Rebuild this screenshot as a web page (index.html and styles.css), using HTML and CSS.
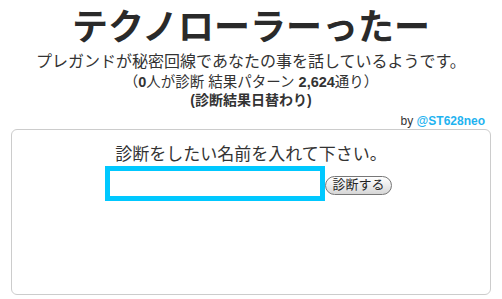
FILE: index.html
```html
<!DOCTYPE html>
<html lang="ja">
<head>
<meta charset="utf-8">
<title>テクノローラーったー</title>
<link rel="stylesheet" href="styles.css">
</head>
<body>
<div class="wrap">
  <h1 class="title">テクノローラーったー</h1>
  <p class="desc">プレガンドが秘密回線であなたの事を話しているようです。</p>
  <p class="count">（<b>0</b>人が診断 結果パターン <b>2,624</b>通り）</p>
  <p class="daily">(診断結果日替わり)</p>
  <p class="by">by <a class="author" href="#">@ST628neo</a></p>
  <div class="box">
    <p class="prompt">診断をしたい名前を入れて下さい。</p>
    <form class="row">
      <input class="name" type="text">
      <button class="submit" type="button">診断する</button>
    </form>
  </div>
</div>
</body>
</html>
```
FILE: styles.css
```css
html, body {
  margin: 0;
  padding: 0;
  background: #fff;
}
body {
  font-family: "Liberation Sans", "Noto Sans CJK JP", sans-serif;
  color: #333;
}
.wrap {
  width: 480px;
  margin: 0 auto;
  text-align: center;
}
.title {
  margin: 8px 0 0;
  font-size: 36px;
  line-height: 40px;
  font-weight: bold;
  color: #2a2a2a;
}
.desc {
  margin: 4px 0 0;
  font-size: 16px;
  line-height: 20px;
}
.count {
  margin: 1px 0 0;
  font-size: 14.5px;
  line-height: 18px;
}
.daily {
  margin: 0;
  font-size: 14px;
  line-height: 18px;
  font-weight: bold;
}
.by {
  margin: 4px 0 0;
  padding-right: 6px;
  text-align: right;
  font-size: 12px;
  line-height: 16px;
}
.author {
  color: #1fb3f0;
  font-weight: bold;
  text-decoration: none;
}
.box {
  box-sizing: border-box;
  height: 166px;
  border: 1px solid #ccc;
  border-radius: 6px;
  padding-top: 15px;
}
.prompt {
  margin: 0;
  font-size: 17px;
  line-height: 20px;
}
.row {
  margin: 1px 0 0;
  display: flex;
  justify-content: center;
  align-items: center;
  padding-right: 5px;
}
.name {
  box-sizing: border-box;
  width: 220px;
  height: 35px;
  margin: 0;
  border: 5px solid #00c8ff;
  outline: none;
  background: #fff;
}
.submit {
  box-sizing: border-box;
  width: 67px;
  height: 19px;
  margin: 3px 0 0;
  padding: 0;
  border: 1px solid #777;
  border-radius: 10px;
  background: linear-gradient(#ffffff, #ececec 50%, #d6d6d6);
  font-family: "Liberation Sans", "Noto Sans CJK JP", sans-serif;
  font-size: 13px;
  line-height: 16px;
  color: #222;
}
```
